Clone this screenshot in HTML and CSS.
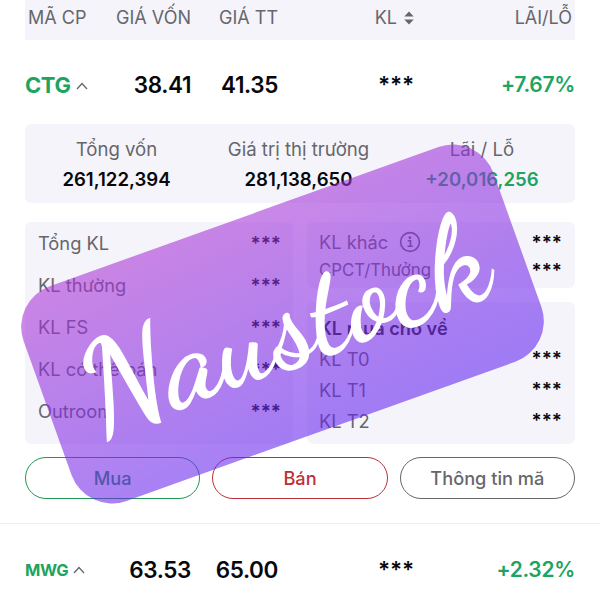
FILE: index.html
```html
<!DOCTYPE html>
<html lang="vi">
<head>
<meta charset="utf-8">
<title>Naustock</title>
<link rel="stylesheet" href="styles.css">
</head>
<body>
<main class="screen">
  <header class="columns head">
    <span class="first">MÃ CP</span><span>GIÁ VỐN</span><span>GIÁ TT</span>
    <span class="sort">KL <svg width="10" height="14" viewBox="0 0 10 14"><path d="M5 .5 9.7 5.5H.3ZM5 13.5.3 8.5h9.4Z" fill="#66666b"/></svg></span><span class="pl">LÃI/LỖ</span>
  </header>
  <section class="columns row">
    <span class="code">CTG <svg width="12" height="8" viewBox="0 0 12 8"><path d="M1 7 6 1.5 11 7" fill="none" stroke="#66666b" stroke-width="1.3"/></svg></span>
    <b>38.41</b><b>41.35</b><b class="stars">***</b><b class="up">+7.67%</b>
  </section>
  <section class="panel summary">
    <div><span>Tổng vốn</span><b>261,122,394</b></div>
    <div><span>Giá trị thị trường</span><b>281,138,650</b></div>
    <div><span>Lãi / Lỗ</span><b class="up">+20,016,256</b></div>
  </section>
  <section class="details">
    <div class="panel volumes">
      <div class="line"><span>Tổng KL</span><b>***</b></div>
      <div class="line"><span>KL thường</span><b>***</b></div>
      <div class="line"><span>KL FS</span><b>***</b></div>
      <div class="line"><span>KL có thể bán</span><b>***</b></div>
      <div class="line"><span>Outroom</span><b>***</b></div>
    </div>
    <div class="side">
      <div class="panel other">
        <div class="line"><span class="info">KL khác <svg width="22" height="22" viewBox="0 0 22 22"><circle cx="11" cy="11" r="9.4" fill="none" stroke="#66666b" stroke-width="1.6"/><circle cx="10.9" cy="6.7" r="1.4" fill="#66666b"/><path d="M8.7 9.8h2.8v5.4M8.5 15.3h5.3" fill="none" stroke="#66666b" stroke-width="1.6"/></svg></span><b>***</b></div>
        <div class="line small"><span>CPCT/Thưởng</span><b>***</b></div>
      </div>
      <div class="panel pending">
        <div class="line title"><span>KL mua chờ về</span></div>
        <div class="line"><span>KL T0</span><b>***</b></div>
        <div class="line"><span>KL T1</span><b>***</b></div>
        <div class="line"><span>KL T2</span><b>***</b></div>
      </div>
    </div>
  </section>
  <nav class="actions">
    <button class="buy">Mua</button><button class="sell">Bán</button><button class="more">Thông tin mã</button>
  </nav>
  <section class="columns row next">
    <span class="code minor">MWG <svg width="12" height="8" viewBox="0 0 12 8"><path d="M1 7 6 1.5 11 7" fill="none" stroke="#66666b" stroke-width="1.3"/></svg></span>
    <b>63.53</b><b>65.00</b><b class="stars">***</b><b class="up">+2.32%</b>
  </section>
  <div class="stamp"><span>Naustock</span></div>
</main>
</body>
</html>
```
FILE: styles.css
```css
* { box-sizing: border-box; }
body { margin: 0; background: #fff; }
.screen {
  position: relative;
  width: 600px;
  height: 600px;
  overflow: hidden;
  font-family: Inter, "Liberation Sans", sans-serif;
  color: #66666b;
}
.screen b { font-weight: 600; color: #08080c; }
.screen .up { color: #1da45f; }
.columns {
  display: grid;
  grid-template-columns: 85px 81px 87px 136px 161px;
  align-items: center;
  margin: 0 25px;
  text-align: right;
  white-space: nowrap;
}
.head {
  height: 40px;
  padding-bottom: 5px;
  background: #f5f4fb;
  font-size: 18px;
}
.head .first { text-align: left; padding-left: 3px; }
.head .pl { padding-right: 3px; }
.sort svg { margin-left: 2px; vertical-align: -1px; }
.row { height: 84px; padding-top: 5px; font-size: 22.5px; letter-spacing: -.4px; }
.row .stars { font-size: 22.5px; letter-spacing: -.1px; }
.row .up { font-size: 21px; letter-spacing: -.3px; }
.row .code { text-align: left; font-weight: 700; color: #1da45f; font-size: 22px; }
.code svg { vertical-align: 3px; margin-left: 1px; }
.row .minor { font-size: 16.5px; }
.minor svg { vertical-align: 2px; }
.panel { background: #f5f4fb; border-radius: 6px; }
.summary {
  display: grid;
  grid-template-columns: 183px 181px 186px;
  height: 79px;
  margin: 0 25px;
  padding-top: 12px;
  text-align: center;
}
.summary span, .summary b { display: block; }
.summary span { font-size: 18.6px; line-height: 27px; }
.summary b { font-size: 18.6px; line-height: 32px; }
.details {
  display: grid;
  grid-template-columns: 268px 268px;
  gap: 14px;
  margin: 19px 25px 13px;
  height: 222px;
}
.line {
  display: flex;
  justify-content: space-between;
  align-items: center;
  font-size: 18.3px;
  white-space: nowrap;
}
.line b { font-size: 18.8px; line-height: 18px; padding-top: 1px; }
.volumes { padding: 0 12px 0 13px; }
.volumes .line { height: 42px; }
.side { display: grid; grid-template-rows: 66px 142px; gap: 14px; }
.other, .pending { padding-left: 12px; padding-right: 13px; }
.other { padding-top: 6px; }
.other .line { height: 28px; }
.line.small { font-size: 16.8px; }
.info { display: flex; align-items: center; gap: 11px; }
.pending { padding-top: 10px; }
.pending .line { height: 31px; }
.pending .title { font-weight: 600; font-size: 18.2px; color: #222228; }
.actions {
  display: grid;
  grid-template-columns: repeat(3, 1fr);
  gap: 12px;
  height: 42px;
  margin: 0 25px;
}
button {
  border: 1.5px solid currentColor;
  border-radius: 22px;
  background: transparent;
  padding: 0;
  font: 500 18.2px Inter, sans-serif;
}
.buy { color: #249653; }
.sell { color: #bd3037; }
.more { color: #66666b; }
.next { margin: 24px 0 0; padding: 2px 25px 0; height: 90px; border-top: 1px solid #ededf0; }
/* Translucent brand stamp laid across the list */
.stamp {
  position: absolute;
  left: 32.5px;
  top: 210px;
  width: 499px;
  height: 228px;
  border-radius: 43px;
  display: flex;
  align-items: center;
  justify-content: center;
  transform: rotate(-19.7deg);
  background: linear-gradient(174deg, rgba(171, 52, 212, .58), rgba(97, 36, 240, .58) 95%);
  color: #fff;
  font: 700 127px "Dancing Script", "Brush Script MT", cursive;
}
```
